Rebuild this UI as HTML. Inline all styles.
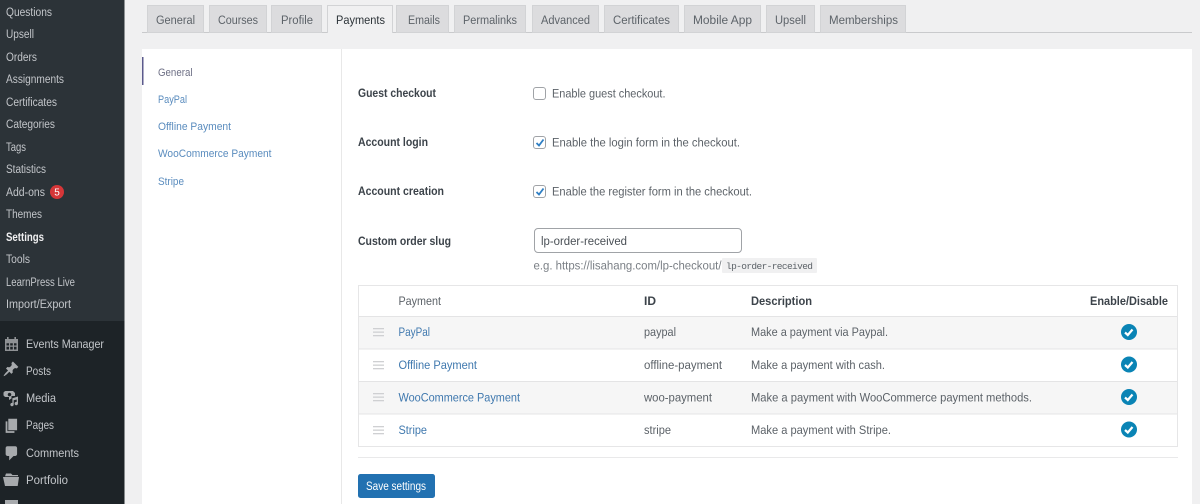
<!DOCTYPE html>
<html><head><meta charset="utf-8"><style>
html,body{margin:0;padding:0;width:1200px;height:504px;overflow:hidden;background:#f0f0f1}
svg{display:block;font-family:"Liberation Sans",sans-serif;font-size:12.200px;filter:blur(.3px)}
.m{fill:#c3c6ca}.n{fill:#5a8cbe}.b{font-weight:bold;fill:#3c434a}.t{fill:#5c6268}.l{fill:#3f78ae}.tb{fill:#5d6369}
.i{fill:#a7aaad}.g{fill:#cfd0d2}
</style></head><body>
<svg width="1200" height="504" viewBox="0 0 1200 504" xmlns="http://www.w3.org/2000/svg">
<rect x="0" y="0" width="124.500" height="504" fill="#2c3338"/>
<rect x="0" y="321" width="124.500" height="183" fill="#1d2327"/>
<g class="m" style="font-size:11.500px">
<text x="6" y="16" textLength="46" lengthAdjust="spacingAndGlyphs">Questions</text>
<text x="6" y="38" textLength="28" lengthAdjust="spacingAndGlyphs">Upsell</text>
<text x="6" y="61" textLength="31" lengthAdjust="spacingAndGlyphs">Orders</text>
<text x="6" y="83" textLength="58" lengthAdjust="spacingAndGlyphs">Assignments</text>
<text x="6" y="106" textLength="51" lengthAdjust="spacingAndGlyphs">Certificates</text>
<text x="6" y="128" textLength="49" lengthAdjust="spacingAndGlyphs">Categories</text>
<text x="6" y="151" textLength="20" lengthAdjust="spacingAndGlyphs">Tags</text>
<text x="6" y="173" textLength="40" lengthAdjust="spacingAndGlyphs">Statistics</text>
<text x="6" y="196" textLength="39" lengthAdjust="spacingAndGlyphs">Add-ons</text>
<text x="6" y="218" textLength="36" lengthAdjust="spacingAndGlyphs">Themes</text>
<text x="6" y="241" textLength="38" lengthAdjust="spacingAndGlyphs" style="fill:#f0f0f1;font-weight:bold">Settings</text>
<text x="6" y="263" textLength="24" lengthAdjust="spacingAndGlyphs">Tools</text>
<text x="6" y="286" textLength="69" lengthAdjust="spacingAndGlyphs">LearnPress Live</text>
<text x="6" y="308" textLength="65" lengthAdjust="spacingAndGlyphs">Import/Export</text>
</g>
<circle cx="57" cy="192" r="7" fill="#d63638"/>
<text x="54.300" y="195.700" fill="#fff" style="font-size:10px">5</text>
<g class="m" style="font-size:12.300px">
<text x="26" y="348" textLength="78" lengthAdjust="spacingAndGlyphs">Events Manager</text>
<text x="26" y="375" textLength="25" lengthAdjust="spacingAndGlyphs">Posts</text>
<text x="26" y="402" textLength="30" lengthAdjust="spacingAndGlyphs">Media</text>
<text x="26" y="429" textLength="28" lengthAdjust="spacingAndGlyphs">Pages</text>
<text x="26" y="457" textLength="53" lengthAdjust="spacingAndGlyphs">Comments</text>
<text x="26" y="484" textLength="42" lengthAdjust="spacingAndGlyphs">Portfolio</text>
</g>
<path class="i" fill-rule="evenodd" style="fill:#8f9295" d="M7 337h1.600v2h5.800v-2H16v2h2v12H5v-12h2zM6.500 343.200v2.300h2.500v-2.300zm3.700 0v2.300h2.600v-2.300zm3.800 0v2.300h2.500v-2.300zM6.500 346.800v2.700h2.500v-2.700zm3.700 0v2.700h2.600v-2.700zm3.800 0v2.700h2.500v-2.700z"/>
<path class="i" transform="translate(2.500 360.500) scale(.85)" d="M10.440 3.020l1.820-1.820 6.360 6.350-1.830 1.820c-1.050-.680-2.480-.570-3.410.360l-.750.750c-.920.930-1.040 2.350-.350 3.410l-1.830 1.820-2.410-2.410-2.800 2.790c-.420.420-3.380 2.710-3.800 2.290s1.860-3.390 2.280-3.810l2.790-2.790L4.100 9.360l1.830-1.820c1.050.690 2.480.570 3.400-.360l.750-.750c.930-.920 1.050-2.350.360-3.410z"/>
<path class="i" fill-rule="evenodd" d="M6 391h7l2 2v3h-3.500v2.500L9 400v-3H6c-1 0-2.500-1-2.500-2v-2c0-1 1.500-2 2.500-2zm3.500 1.800a1.800 1.800 0 1 0 .01 0z"/>
<path class="i" d="M18 396.500v7a1.700 1.700 0 1 1-1.300-1.600v-2.400l-3 .8v4.200a1.700 1.700 0 1 1-1.300-1.600V398.300z"/>
<path class="i" transform="translate(3 417) scale(.88)" d="M6 15V2h10v13H6zm-1 1h8v2H3V5h2v11z"/>
<path class="i" transform="translate(3 444.500) scale(.88)" d="M5 2h9c1.100 0 2 .9 2 2v7c0 1.100-.9 2-2 2h-2l-5 5v-5H5c-1.100 0-2-.9-2-2V4c0-1.100.9-2 2-2z"/>
<path class="i" d="M5 476.300l1-2.800h5l1.500 1.500H18v1.300H5zM3 477h16l-1.300 9H5z"/>
<path class="i" d="M5 500h13v4H5z"/>
<rect x="142" y="32" width="1050" height="1" fill="#c9cacc"/>
<g fill="#dcdcde" stroke="#d2d3d5">
<rect x="147.500" y="5.500" width="56" height="27"/><rect x="209.500" y="5.500" width="57" height="27"/><rect x="271.500" y="5.500" width="50" height="27"/>
<rect x="396.500" y="5.500" width="52" height="27"/><rect x="454.500" y="5.500" width="71" height="27"/><rect x="532.500" y="5.500" width="66" height="27"/>
<rect x="604.500" y="5.500" width="74" height="27"/><rect x="684.500" y="5.500" width="76" height="27"/><rect x="766.500" y="5.500" width="48" height="27"/><rect x="820.500" y="5.500" width="85" height="27"/>
</g>
<path d="M327.500 33V5.500h65V33" fill="#f0f0f1" stroke="#d2d3d5"/>
<rect x="328" y="31" width="64" height="3" fill="#f0f0f1"/>
<g class="tb">
<text x="156" y="24" textLength="39" lengthAdjust="spacingAndGlyphs">General</text>
<text x="218" y="24" textLength="40" lengthAdjust="spacingAndGlyphs">Courses</text>
<text x="281" y="24" textLength="32" lengthAdjust="spacingAndGlyphs">Profile</text>
<text x="336" y="24" textLength="49" lengthAdjust="spacingAndGlyphs" style="fill:#2c3338">Payments</text>
<text x="408" y="24" textLength="32" lengthAdjust="spacingAndGlyphs">Emails</text>
<text x="463" y="24" textLength="54" lengthAdjust="spacingAndGlyphs">Permalinks</text>
<text x="541" y="24" textLength="49" lengthAdjust="spacingAndGlyphs">Advanced</text>
<text x="613" y="24" textLength="57" lengthAdjust="spacingAndGlyphs">Certificates</text>
<text x="693" y="24" textLength="59" lengthAdjust="spacingAndGlyphs">Mobile App</text>
<text x="775" y="24" textLength="31" lengthAdjust="spacingAndGlyphs">Upsell</text>
<text x="829" y="24" textLength="69" lengthAdjust="spacingAndGlyphs">Memberships</text>
</g>
<rect x="142" y="49" width="1050" height="455" fill="#fff"/>
<rect x="341" y="49" width="1" height="455" fill="#e8e8e8"/>
<rect x="142" y="57" width="1.500" height="28" fill="#5b5a8c"/>
<g class="n" style="font-size:11px">
<text x="158" y="76" textLength="34.500" lengthAdjust="spacingAndGlyphs" style="fill:#6d6f85">General</text>
<text x="158" y="103" textLength="29" lengthAdjust="spacingAndGlyphs">PayPal</text>
<text x="158" y="130" textLength="73" lengthAdjust="spacingAndGlyphs">Offline Payment</text>
<text x="158" y="157" textLength="113.500" lengthAdjust="spacingAndGlyphs">WooCommerce Payment</text>
<text x="158" y="185" textLength="26" lengthAdjust="spacingAndGlyphs">Stripe</text>
</g>
<g class="b">
<text x="358" y="97" textLength="78" lengthAdjust="spacingAndGlyphs">Guest checkout</text>
<text x="358" y="146" textLength="70" lengthAdjust="spacingAndGlyphs">Account login</text>
<text x="358" y="195" textLength="86" lengthAdjust="spacingAndGlyphs">Account creation</text>
<text x="358" y="245" textLength="93" lengthAdjust="spacingAndGlyphs">Custom order slug</text>
</g>
<g fill="#fff" stroke="#a0a3a7">
<rect x="533.500" y="87.500" width="12" height="12" rx="2.500"/>
<rect x="533.500" y="136.500" width="12" height="12" rx="2.500"/>
<rect x="533.500" y="185.500" width="12" height="12" rx="2.500"/>
<rect x="534.500" y="228.500" width="207" height="24" rx="3.500"/>
</g>
<path d="M536.500 143l2.500 2.500 4.500-6M536.500 192l2.500 2.500 4.500-6" fill="none" stroke="#2f7fc4" stroke-width="1.800"/>
<g class="t">
<text x="552" y="97.500" textLength="113.500" lengthAdjust="spacingAndGlyphs">Enable guest checkout.</text>
<text x="552" y="146.500" textLength="188" lengthAdjust="spacingAndGlyphs">Enable the login form in the checkout.</text>
<text x="552" y="195.500" textLength="200" lengthAdjust="spacingAndGlyphs">Enable the register form in the checkout.</text>
<text x="541" y="245" textLength="86" lengthAdjust="spacingAndGlyphs" style="fill:#4a5056">lp-order-received</text>
<text x="533.500" y="269.500" textLength="188" lengthAdjust="spacingAndGlyphs" style="fill:#7a7f85">e.g. https://lisahang.com/lp-checkout/</text>
</g>
<rect x="722" y="258" width="95" height="15" rx="1" fill="#f0f0f1"/>
<text x="726" y="269" textLength="87" lengthAdjust="spacing" style="font-family:'Liberation Mono',monospace;font-size:9.500px;fill:#5c6268">lp-order-received</text>
<rect x="358.500" y="285.500" width="819" height="161" fill="#fff" stroke="#e6e6e7"/>
<rect x="359" y="317" width="818" height="31.500" fill="#f6f6f6"/>
<rect x="359" y="382" width="818" height="32" fill="#f6f6f6"/>
<g fill="#e4e4e5"><rect x="359" y="316" width="818" height="1"/><rect x="359" y="348.500" width="818" height="1"/><rect x="359" y="381" width="818" height="1"/><rect x="359" y="413.500" width="818" height="1"/></g>
<g class="g">
<rect x="373" y="328" width="11" height="1.300"/><rect x="373" y="331.500" width="11" height="1.300"/><rect x="373" y="335" width="11" height="1.300"/>
<rect x="373" y="361" width="11" height="1.300"/><rect x="373" y="364.500" width="11" height="1.300"/><rect x="373" y="368" width="11" height="1.300"/>
<rect x="373" y="393" width="11" height="1.300"/><rect x="373" y="396.500" width="11" height="1.300"/><rect x="373" y="400" width="11" height="1.300"/>
<rect x="373" y="426" width="11" height="1.300"/><rect x="373" y="429.500" width="11" height="1.300"/><rect x="373" y="433" width="11" height="1.300"/>
</g>
<text class="t" x="398.500" y="305" textLength="42.500" lengthAdjust="spacingAndGlyphs">Payment</text>
<g class="b">
<text x="644" y="305" textLength="12" lengthAdjust="spacingAndGlyphs">ID</text>
<text x="751" y="305" textLength="61" lengthAdjust="spacingAndGlyphs">Description</text>
<text x="1090" y="305" textLength="78" lengthAdjust="spacingAndGlyphs">Enable/Disable</text>
</g>
<g class="l">
<text x="398.500" y="336" textLength="31.500" lengthAdjust="spacingAndGlyphs">PayPal</text>
<text x="398.500" y="369" textLength="78.500" lengthAdjust="spacingAndGlyphs">Offline Payment</text>
<text x="398.500" y="401.500" textLength="121.500" lengthAdjust="spacingAndGlyphs">WooCommerce Payment</text>
<text x="398.500" y="434" textLength="28.500" lengthAdjust="spacingAndGlyphs">Stripe</text>
</g>
<g class="t">
<text x="644" y="336" textLength="32" lengthAdjust="spacingAndGlyphs">paypal</text>
<text x="644" y="369" textLength="78" lengthAdjust="spacingAndGlyphs">offline-payment</text>
<text x="644" y="401.500" textLength="68" lengthAdjust="spacingAndGlyphs">woo-payment</text>
<text x="644" y="434" textLength="27" lengthAdjust="spacingAndGlyphs">stripe</text>
<text x="751" y="336" textLength="137" lengthAdjust="spacingAndGlyphs">Make a payment via Paypal.</text>
<text x="751" y="369" textLength="134" lengthAdjust="spacingAndGlyphs">Make a payment with cash.</text>
<text x="751" y="401.500" textLength="281" lengthAdjust="spacingAndGlyphs">Make a payment with WooCommerce payment methods.</text>
<text x="751" y="434" textLength="140" lengthAdjust="spacingAndGlyphs">Make a payment with Stripe.</text>
</g>
<g fill="#0a84b5">
<circle cx="1129" cy="332" r="8"/><circle cx="1129" cy="364.500" r="8"/><circle cx="1129" cy="397" r="8"/><circle cx="1129" cy="429.500" r="8"/>
</g>
<g fill="none" stroke="#fff" stroke-width="2.200">
<path d="M1125 332.500l2.800 2.500 4.700-5.500"/><path d="M1125 365l2.800 2.500 4.700-5.500"/><path d="M1125 397.500l2.800 2.500 4.700-5.500"/><path d="M1125 430l2.800 2.500 4.700-5.500"/>
</g>
<rect x="358" y="457" width="820" height="1" fill="#e9e9ea"/>
<rect x="358" y="474" width="77" height="24" rx="2.500" fill="#2271b1"/>
<text x="366" y="490" textLength="60" lengthAdjust="spacingAndGlyphs" fill="#fff" style="font-size:11.500px">Save settings</text>
</svg>
</body></html>
